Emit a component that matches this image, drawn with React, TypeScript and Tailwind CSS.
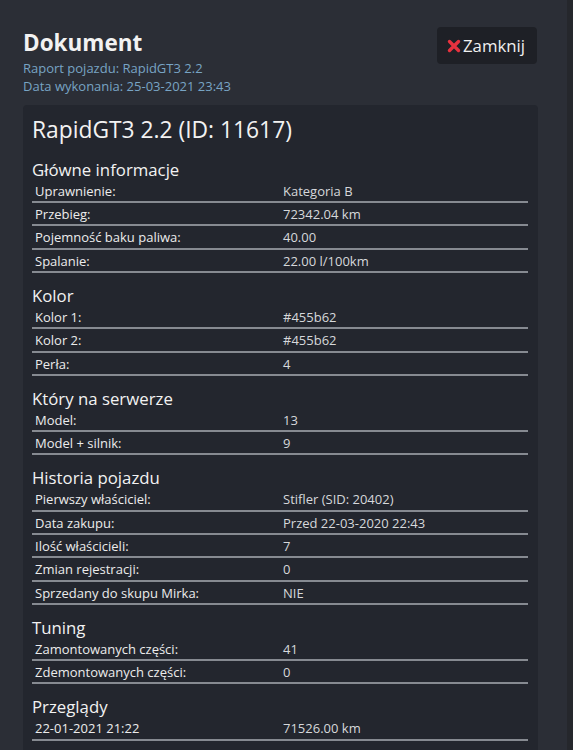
import React from 'react';

type Row = [string, string];

const sections: { title: string; rows: Row[] }[] = [
  {
    title: 'Główne informacje',
    rows: [
      ['Uprawnienie:', 'Kategoria B'],
      ['Przebieg:', '72342.04 km'],
      ['Pojemność baku paliwa:', '40.00'],
      ['Spalanie:', '22.00 l/100km'],
    ],
  },
  {
    title: 'Kolor',
    rows: [
      ['Kolor 1:', '#455b62'],
      ['Kolor 2:', '#455b62'],
      ['Perła:', '4'],
    ],
  },
  {
    title: 'Który na serwerze',
    rows: [
      ['Model:', '13'],
      ['Model + silnik:', '9'],
    ],
  },
  {
    title: 'Historia pojazdu',
    rows: [
      ['Pierwszy właściciel:', 'Stifler (SID: 20402)'],
      ['Data zakupu:', 'Przed 22-03-2020 22:43'],
      ['Ilość właścicieli:', '7'],
      ['Zmian rejestracji:', '0'],
      ['Sprzedany do skupu Mirka:', 'NIE'],
    ],
  },
  {
    title: 'Tuning',
    rows: [
      ['Zamontowanych części:', '41'],
      ['Zdemontowanych części:', '0'],
    ],
  },
  {
    title: 'Przeglądy',
    rows: [['22-01-2021 21:22', '71526.00 km']],
  },
];

function CloseIcon() {
  return (
    <svg width="14" height="14" viewBox="0 0 14 14" className="shrink-0">
      <path d="M2.5 2.5 L11.5 11.5 M11.5 2.5 L2.5 11.5" stroke="#e8323f" strokeWidth="3.4" strokeLinecap="round" />
    </svg>
  );
}

export default function App() {
  return (
    <div className="min-h-screen flex bg-[#2b2e36] font-['Open_Sans',sans-serif] overflow-hidden">
      <div className="flex-1 pt-[27px] pl-[23px]">
        <div className="w-[515px]">
          {/* Header */}
          <div className="flex justify-between items-start">
            <div className="pt-[2px]">
              <h1 className="text-[22.5px] leading-[27px] font-bold text-[#f2f2f2] mb-[4px]">Dokument</h1>
              <p className="text-[13px] leading-[17.5px] text-[#78a4c4]">Raport pojazdu: RapidGT3 2.2</p>
              <p className="text-[13px] leading-[17.5px] text-[#78a4c4]">Data wykonania: 25-03-2021 23:43</p>
            </div>
            <button className="h-[37px] w-[100px] mr-[1px] flex items-center gap-[2px] pl-[10px] rounded-[4px] bg-[#1e2026] text-[16.8px] text-[#f0f0f0]">
              <CloseIcon />
              <span>Zamknij</span>
            </button>
          </div>

          {/* Card */}
          <div className="mt-[10px] bg-[#23262e] rounded-t-[4px] pt-[11px] pl-[9px] pr-[10px] pb-6">
            <h2 className="text-[22.8px] leading-[28px] text-[#f2f2f2] mb-[3px]">RapidGT3 2.2 (ID: 11617)</h2>
            {sections.map((s) => (
              <div key={s.title}>
                <div className="h-[32.7px] flex items-end">
                  <h3 className="text-[16.8px] leading-[20px] text-[#f2f2f2]">{s.title}</h3>
                </div>
                {s.rows.map(([label, value]) => (
                  <div
                    key={label}
                    className="h-[23.38px] pt-[1px] grid grid-cols-2 border-b-2 border-[#868a91] text-[13px] leading-[21.38px]"
                  >
                    <span className="px-[3px] text-[#ececec]">{label}</span>
                    <span className="px-[3px] text-[#d6d8db]">{value}</span>
                  </div>
                ))}
              </div>
            ))}
          </div>
        </div>
      </div>
      <div className="w-[6px] bg-[#25272c]" />
    </div>
  );
}
